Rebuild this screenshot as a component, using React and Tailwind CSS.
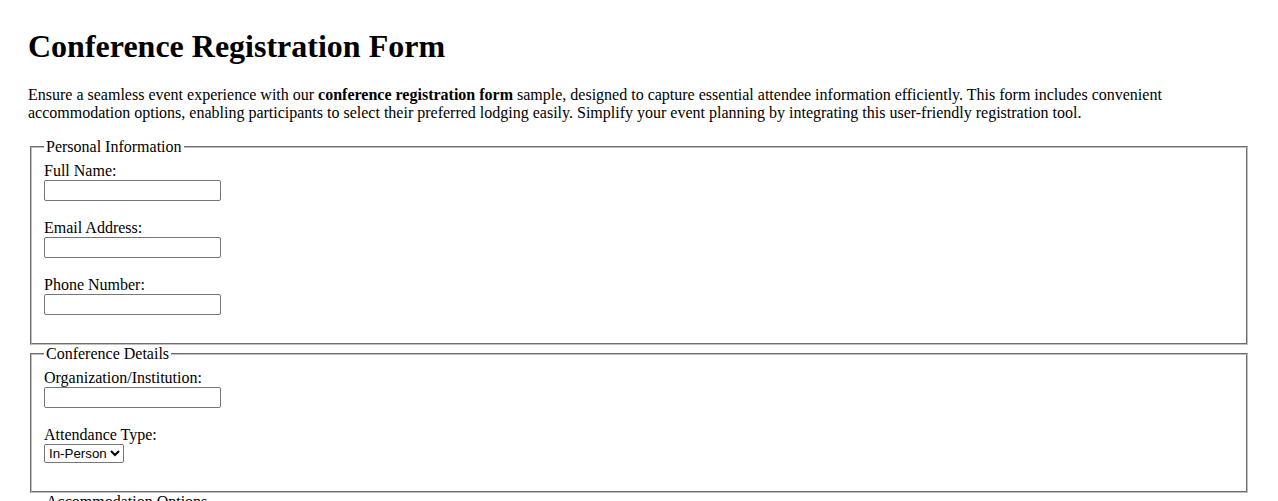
import React from 'react';

const serif = "font-['Liberation_Serif','Times_New_Roman',serif]";

// one label + control pair, spaced like label<br>input<br><br>
const Field = ({ label, children }) => (
  <div className="mb-[18px]">
    <label className="block h-[18px] leading-[18px]">{label}</label>
    {children}
  </div>
);

const TextInput = (props) => (
  <input
    type="text"
    className="block w-[177px] h-[21px] px-[2px] py-[1px] border border-[#767676] rounded-[2px] bg-white text-[13.33px] font-['Liberation_Sans',Arial,sans-serif]"
    {...props}
  />
);

const Group = ({ legend, children }) => (
  <fieldset className="mx-[2px] border-2 [border-style:groove] border-[#c0c0c0] pt-[5.6px] px-[12px] pb-[10px]">
    <legend className="px-[2px] leading-[18px]">{legend}</legend>
    {children}
  </fieldset>
);

export default function App() {
  return (
    <div className={`${serif} text-black bg-white text-[16px] px-[28px] pt-[28px] min-h-[501px]`}>
      <h1 className="text-[32px] font-bold leading-[37px] mb-[21.44px]">Conference Registration Form</h1>
      <p className="leading-[18px] mb-[16px]">
        Ensure a seamless event experience with our <strong>conference registration form</strong> sample,
        designed to capture essential attendee information efficiently. This form includes convenient
        accommodation options, enabling participants to select their preferred lodging easily. Simplify your
        event planning by integrating this user-friendly registration tool.
      </p>

      <form>
        <Group legend="Personal Information">
          <Field label="Full Name:">
            <TextInput name="fullName" />
          </Field>
          <Field label="Email Address:">
            <TextInput name="email" />
          </Field>
          <Field label="Phone Number:">
            <TextInput name="phone" />
          </Field>
        </Group>

        <Group legend="Conference Details">
          <Field label="Organization/Institution:">
            <TextInput name="organization" />
          </Field>
          <Field label="Attendance Type:">
            <select
              name="attendance"
              defaultValue="in-person"
              className="block h-[19px] border border-[#767676] rounded-[2px] bg-white text-[13.33px] font-['Liberation_Sans',Arial,sans-serif]"
            >
              <option value="in-person">In-Person</option>
              <option value="virtual">Virtual</option>
            </select>
          </Field>
        </Group>

        <Group legend="Accommodation Options">
          <Field label="Hotel Preference:">
            <TextInput name="hotel" />
          </Field>
        </Group>
      </form>
    </div>
  );
}
